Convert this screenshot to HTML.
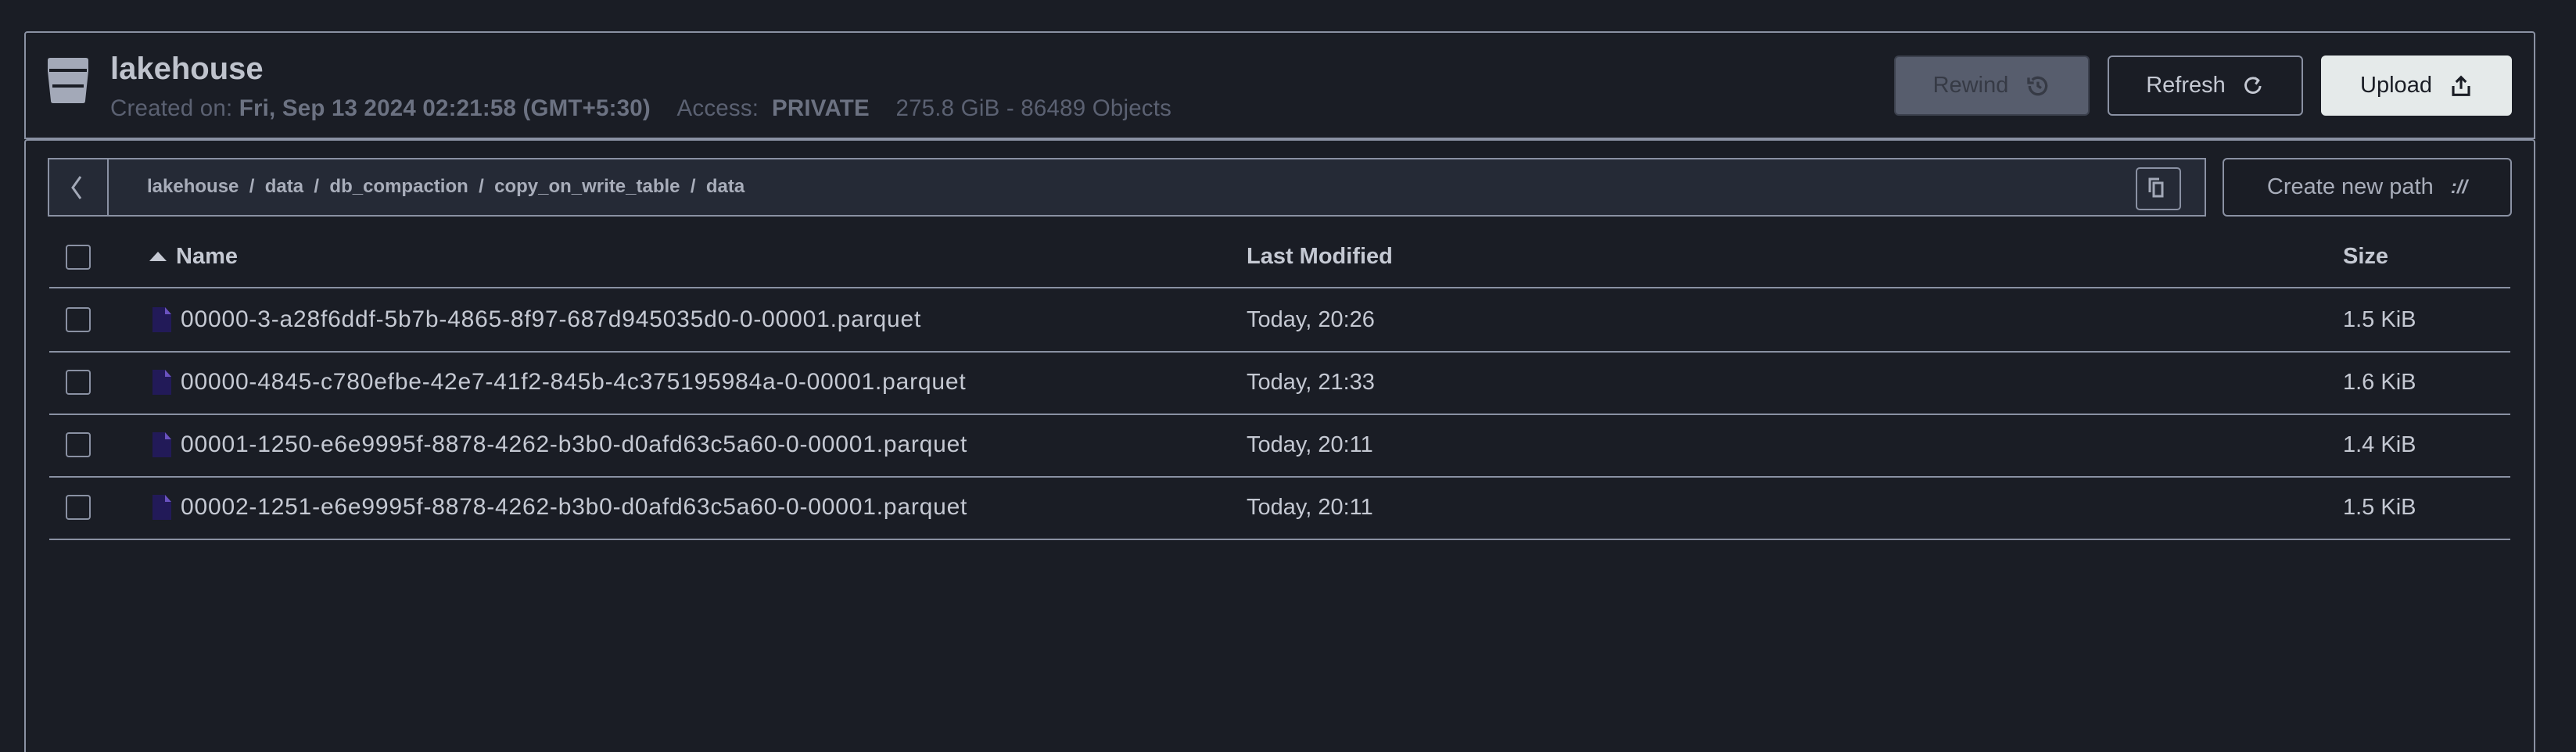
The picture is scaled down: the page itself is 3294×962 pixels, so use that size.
<!DOCTYPE html>
<html style="overflow:hidden"><head><style>
body{margin:0;width:3294px;height:962px;background:#1a1d25;font-family:"Liberation Sans",sans-serif;color:#c5c9d3;overflow:hidden;position:relative}
.a{position:absolute}
.box{border:2px solid #8a91a3;border-radius:4px}
.btn{position:absolute;border-radius:6px;display:flex;align-items:center;justify-content:center;font-size:29px;gap:22px;box-sizing:border-box}
.cb{position:absolute;left:84px;width:28px;height:28px;border:2px solid #8a91a3;border-radius:4px}
.row{position:absolute;left:63px;width:3147px;height:80px;border-bottom:2px solid #8a91a3;font-size:29px}
.row span{position:absolute;top:24px}
.row span.fn{font-size:30px;letter-spacing:0.8px;top:23px}
.fi{position:absolute;left:132px;top:24px;width:24px;height:32px}
</style></head><body>
<div class="a box" style="left:31px;top:40px;width:3207px;height:134px;border-radius:4px 4px 0 0"></div>
<div class="a box" style="left:31px;top:178px;width:3207px;height:790px;border-radius:4px"></div>
<svg class="a" style="left:59px;top:73px" width="56" height="60" viewBox="0 0 56 60"><path d="M2 4q0-3 3-3h46q3 0 3 3v14l-4 38q0 3-3 3H9q-3 0-3-3L2 18z" fill="#a3a9b8"/><rect x="4" y="15" width="48" height="4" fill="#1a1d25"/><rect x="8" y="35" width="40" height="4" fill="#1a1d25"/></svg>
<div class="a" style="left:141px;top:66px;font-size:40px;font-weight:bold;color:#bfc3cd">lakehouse</div>
<div class="a" style="left:141px;top:122px;font-size:29.5px;color:#5b6172;white-space:nowrap;letter-spacing:0.2px">Created on: <b style="color:#6c7282">Fri, Sep 13 2024 02:21:58 (GMT+5:30)</b>&nbsp;&nbsp;&nbsp;&nbsp;Access:&nbsp; <b style="color:#6c7282">PRIVATE</b>&nbsp;&nbsp;&nbsp;&nbsp;275.8 GiB - 86489 Objects</div>
<div class="btn" style="left:2422px;top:71px;width:250px;height:77px;background:#575d6d;border:2px solid #3c414e;color:#363a45">Rewind <svg width="32" height="32" viewBox="0 0 24 24" fill="none" stroke="#363a45" stroke-width="2.5"><path d="M4 12a8 8 0 1 0 2.5-5.8"/><path d="M3 4v5h5"/><path d="M12 8v4l3 2"/></svg></div>
<div class="btn" style="left:2695px;top:71px;width:250px;height:77px;border:2px solid #8a91a3;color:#c5c9d3">Refresh <svg width="28" height="32" viewBox="0 0 24 24" fill="none" stroke="#c5c9d3" stroke-width="2.5"><path d="M17 6a8 8 0 1 0 2 6"/><path d="M13 3l4 3-3 4"/></svg></div>
<div class="btn" style="left:2968px;top:71px;width:244px;height:77px;background:#e5eaea;color:#1a1d25">Upload <svg width="30" height="32" viewBox="0 0 24 24" fill="none" stroke="#1a1d25" stroke-width="2.5"><path d="M4 12v9h16v-9"/><path d="M12 15V3M7 8l5-5 5 5"/></svg></div>
<div class="a" style="left:61px;top:202px;width:2756px;height:71px;background:#252a36;border:2px solid #8a91a3"></div>
<div class="a" style="left:137px;top:204px;width:2px;height:71px;background:#8a91a3"></div>
<svg class="a" style="left:88px;top:224px" width="20" height="32" viewBox="0 0 20 32"><path d="M15 2L5 16l10 14" fill="none" stroke="#a3a9b8" stroke-width="3"/></svg>
<div class="a" style="left:188px;top:225px;font-size:24px;font-weight:bold;color:#a8adba;white-space:nowrap">lakehouse &nbsp;/&nbsp; data &nbsp;/&nbsp; db_compaction &nbsp;/&nbsp; copy_on_write_table &nbsp;/&nbsp; data</div>
<div class="a" style="left:2731px;top:214px;width:54px;height:51px;border:2px solid #8a91a3;border-radius:5px"></div>
<svg class="a" style="left:2745px;top:226px" width="26" height="28" viewBox="0 0 26 28" fill="none" stroke="#a3a9b8" stroke-width="3"><path d="M4 20V3h12"/><rect x="9" y="8" width="11" height="17"/></svg>
<div class="btn" style="left:2842px;top:202px;width:370px;height:75px;border:2px solid #8a91a3;color:#a8adba">Create new path <span style="font-size:24px;font-style:italic;font-weight:bold">://</span></div>
<div class="cb" style="top:313px"></div>
<div class="a" style="left:191px;top:322px;width:0;height:0;border-left:11px solid transparent;border-right:11px solid transparent;border-bottom:12px solid #c5c9d3"></div>
<div class="a" style="left:225px;top:312px;font-size:29px;font-weight:bold">Name</div>
<div class="a" style="left:1594px;top:312px;font-size:29px;font-weight:bold">Last Modified</div>
<div class="a" style="left:2996px;top:312px;font-size:29px;font-weight:bold">Size</div>
<div class="a" style="left:63px;top:367px;width:3147px;height:2px;background:#8a91a3"></div>
<div class="row" style="top:369px"><div class="cb" style="left:21px;top:24px"></div><svg class="fi" viewBox="0 0 24 32"><path d="M0 0h16l8 9v23H0z" fill="#221a58"/><path d="M16 0l8 9h-8z" fill="#6a52c0"/></svg><span class="fn" style="left:168px">00000-3-a28f6ddf-5b7b-4865-8f97-687d945035d0-0-00001.parquet</span><span style="left:1531px">Today, 20:26</span><span style="left:2933px">1.5 KiB</span></div>
<div class="row" style="top:449px"><div class="cb" style="left:21px;top:24px"></div><svg class="fi" viewBox="0 0 24 32"><path d="M0 0h16l8 9v23H0z" fill="#221a58"/><path d="M16 0l8 9h-8z" fill="#6a52c0"/></svg><span class="fn" style="left:168px">00000-4845-c780efbe-42e7-41f2-845b-4c375195984a-0-00001.parquet</span><span style="left:1531px">Today, 21:33</span><span style="left:2933px">1.6 KiB</span></div>
<div class="row" style="top:529px"><div class="cb" style="left:21px;top:24px"></div><svg class="fi" viewBox="0 0 24 32"><path d="M0 0h16l8 9v23H0z" fill="#221a58"/><path d="M16 0l8 9h-8z" fill="#6a52c0"/></svg><span class="fn" style="left:168px">00001-1250-e6e9995f-8878-4262-b3b0-d0afd63c5a60-0-00001.parquet</span><span style="left:1531px">Today, 20:11</span><span style="left:2933px">1.4 KiB</span></div>
<div class="row" style="top:609px"><div class="cb" style="left:21px;top:24px"></div><svg class="fi" viewBox="0 0 24 32"><path d="M0 0h16l8 9v23H0z" fill="#221a58"/><path d="M16 0l8 9h-8z" fill="#6a52c0"/></svg><span class="fn" style="left:168px">00002-1251-e6e9995f-8878-4262-b3b0-d0afd63c5a60-0-00001.parquet</span><span style="left:1531px">Today, 20:11</span><span style="left:2933px">1.5 KiB</span></div>
</body></html>
